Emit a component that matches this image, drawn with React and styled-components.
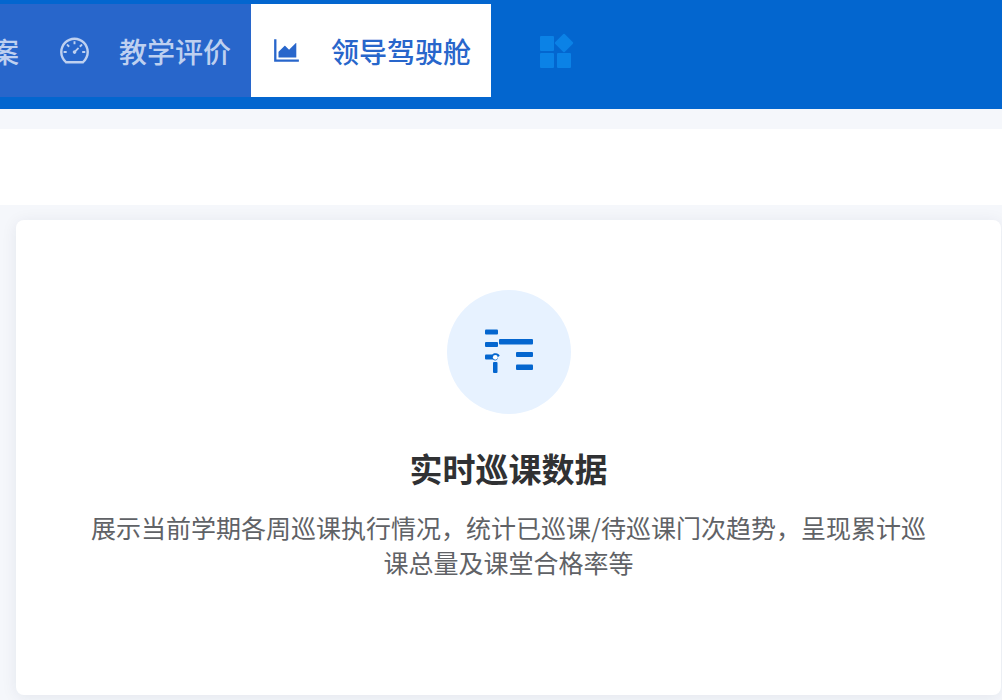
import styled, { createGlobalStyle } from "styled-components";
import { AiOutlineAreaChart, AiOutlineDashboard } from "react-icons/ai";

const navItems = [
  { id: "plan", label: "案", cut: true },
  { id: "evaluation", label: "教学评价", Icon: AiOutlineDashboard },
  { id: "cockpit", label: "领导驾驶舱", Icon: AiOutlineAreaChart, active: true },
];

export default function App() {
  return (
    <>
      <GlobalStyle />
      <Header>
        <Nav>
          {navItems.map(({ id, label, Icon, active, cut }) => (
            <NavButton key={id} type="button" $active={active} $cut={cut}>
              {Icon && <Icon size={33} />}
              {label}
            </NavButton>
          ))}
        </Nav>
        <AppsButton type="button" aria-label="应用">
          <AppsIcon />
        </AppsButton>
      </Header>
      <Toolbar />
      <Content>
        <Card>
          <IconCircle>
            <PatrolIcon />
          </IconCircle>
          <Title>实时巡课数据</Title>
          <Description>
            展示当前学期各周巡课执行情况，统计已巡课/待巡课门次趋势，呈现累计巡课总量及课堂合格率等
          </Description>
        </Card>
      </Content>
    </>
  );
}

function AppsIcon() {
  return (
    <svg width="36" height="36" viewBox="0 0 36 36" fill="#0b82e6">
      <rect x="1" y="3" width="14" height="15" rx="1" />
      <rect x="1" y="20" width="14" height="15" rx="1" />
      <rect x="18" y="20" width="14" height="15" rx="1" />
      <rect x="18.2" y="3.2" width="13.6" height="13.6" rx="1" transform="rotate(45 25 10)" />
    </svg>
  );
}

function PatrolIcon() {
  return (
    <svg width="50" height="50" viewBox="0 0 50 50" fill="#0466cf">
      <rect x="1" y="2.5" width="13" height="5" rx="1" />
      <rect x="1" y="15" width="13" height="5" rx="1" />
      <rect x="15" y="12" width="34" height="5.5" rx="1" />
      <rect x="32" y="25" width="17" height="5" rx="1" />
      <rect x="32" y="37.5" width="17" height="5.5" rx="1" />
      <rect x="1" y="27.5" width="9" height="5" rx="1" />
      <rect x="9" y="35" width="4.5" height="11" rx="1" />
      <path d="M8 28.5c.6-2 2-2.500 4-2.300 1.500.1 3.200 1.200 3.700 2.500l-1.700 1.300c0 2-1.200 3.400-3 3.400s-3-1.500-3-3.300z" />
      <circle cx="11.300" cy="30.300" r="2.400" fill="#fff" />
    </svg>
  );
}

const GlobalStyle = createGlobalStyle`
  * {
    box-sizing: border-box;
  }

  body {
    margin: 0;
    background-color: #f5f7fb;
    font-family: "Noto Sans CJK SC", sans-serif;
  }
`;

const Header = styled.header`
  display: flex;
  align-items: flex-start;
  gap: 48px;
  padding: 4px 0 12px;
  overflow: hidden;
  background-color: #0366cf;
`;

const Nav = styled.nav`
  display: flex;
  flex-shrink: 0;
`;

const NavButton = styled.button`
  display: flex;
  align-items: center;
  gap: 28px;
  height: 93px;
  margin-left: ${props => props.$cut ? "-9px" : "0"};
  padding: 0 20px 0 ${props => props.$cut ? "0" : "19px"};
  border: none;
  background-color: ${props => props.$active ? "#ffffff" : "#2866cb"};
  color: ${props => props.$active ? "#2866cb" : "#bed0f0"};
  font-family: inherit;
  font-size: 28px;
  font-weight: 500;
  line-height: 40px;
  white-space: nowrap;
  cursor: pointer;
`;

const AppsButton = styled.button`
  display: flex;
  align-items: center;
  height: 93px;
  padding: 0;
  border: none;
  background: none;
  cursor: pointer;
`;

const Toolbar = styled.div`
  height: 76px;
  margin-top: 20px;
  background-color: #ffffff;
`;

const Content = styled.main`
  padding: 15px 1px 5px 16px;
`;

const Card = styled.section`
  display: flex;
  flex-direction: column;
  align-items: center;
  padding: 70px 72px 115px;
  border-radius: 8px;
  background-color: #ffffff;
  box-shadow: 0 2px 16px rgba(30, 40, 80, 0.08);
  text-align: center;
`;

const IconCircle = styled.div`
  display: flex;
  align-items: center;
  justify-content: center;
  width: 124px;
  height: 124px;
  border-radius: 50%;
  background-color: #e7f2ff;
`;

const Title = styled.h2`
  margin: 30px 0 18px;
  color: #303133;
  font-size: 33px;
  line-height: 48px;
`;

const Description = styled.p`
  margin: 0;
  color: #606266;
  font-size: 25px;
  line-height: 35px;
`;
